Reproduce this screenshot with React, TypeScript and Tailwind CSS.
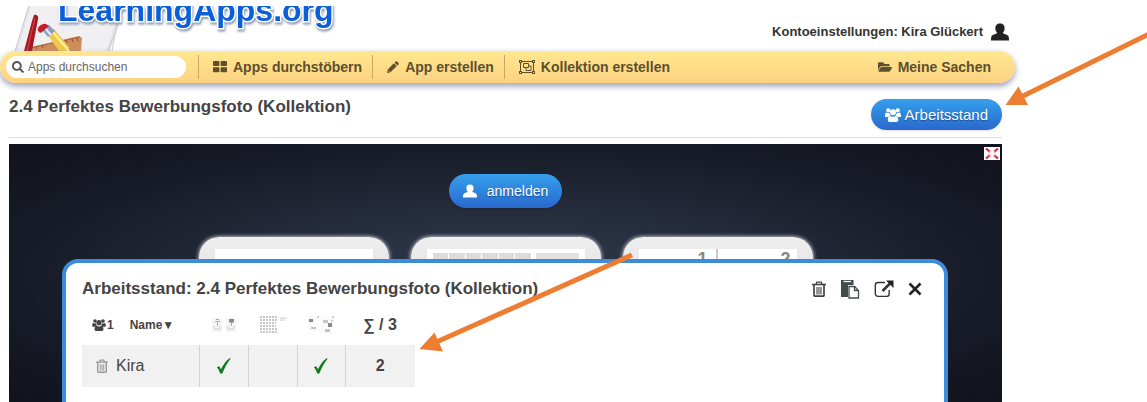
import React from 'react'
import { FaSearch, FaFolderOpen } from 'react-icons/fa'

const UserIcon = ({ className }: { className: string }) => (
  <svg viewBox="0 0 18 18" className={className} fill="currentColor" aria-hidden="true">
    <path d="M9 .5c3 0 4.800 2 4.600 5-.1 2.200-.9 3.600-1.900 4.600 1 1 5.300 1.600 5.900 3.300.3.900.4 2.600.4 4.100H0c0-1.500.1-3.200.4-4.100.6-1.700 4.900-2.300 5.900-3.300-1-1-1.800-2.400-1.900-4.600C4.200 2.500 6 .5 9 .5z" />
  </svg>
)

const UsersIcon = ({ className }: { className: string }) => (
  <svg viewBox="0 0 16 14" className={className} fill="currentColor" aria-hidden="true">
    <circle cx="3.300" cy="2.300" r="2.100" />
    <circle cx="12.700" cy="2.300" r="2.100" />
    <circle cx="8" cy="4.300" r="3" />
    <path d="M0 8.200C0 6 .5 4.600 1.700 4.600c1 .6 2 .7 2.700.5.100 1.100.6 2 1.200 2.700-1 .1-1.900.5-2.500 1.300H1.200C.5 9.100 0 8.800 0 8.200zM16 8.200c0-2.200-.5-3.600-1.700-3.600-1 .6-2 .7-2.700.5-.1 1.100-.6 2-1.200 2.700 1 .1 1.900.5 2.500 1.300h1.900c.7 0 1.200-.3 1.200-.9z" />
    <path d="M5.100 7.900c1.800 1 4 1 5.800 0 1.700.2 2.300 1.900 2.300 4 0 1.300-.9 2.100-2 2.100H4.800c-1.100 0-2-.8-2-2.100 0-2.100.6-3.800 2.300-4z" />
  </svg>
)

const TilesIcon = () => (
  <svg viewBox="0 0 14 12" className="w-3.5 h-3" fill="currentColor" aria-hidden="true">
    <rect width="6.400" height="5" rx=".8" />
    <rect x="7.600" width="6.400" height="5" rx=".8" />
    <rect y="6.200" width="6.400" height="5" rx=".8" />
    <rect x="7.600" y="6.200" width="6.400" height="5" rx=".8" />
  </svg>
)

const PencilIcon = () => (
  <svg viewBox="0 0 12 12" className="size-3" fill="currentColor" aria-hidden="true">
    <path d="M8.600.6c.4-.4 1-.4 1.400 0l1.500 1.500c.4.400.4 1 0 1.400l-1 1L7.500 1.600zM6.900 2.200l2.900 2.900-6.300 6.200L0 12l.7-3.600z" />
    <path d="M1.500 9.200l1.300 1.300-.8.300-.8-.8z" fill="#fddc88" />
  </svg>
)

const GroupIcon = () => (
  <svg viewBox="0 0 16 14" className="w-4 h-3.5" fill="none" stroke="currentColor" aria-hidden="true">
    <rect x="1.500" y="1.500" width="13" height="11" />
    <path d="M4.500 3.500h5v4h-5zM9.500 6h2.500v4.500H7v-3" />
    <path d="M0 0h3v3H0zM13 0h3v3h-3zM0 11h3v3H0zM13 11h3v3h-3z" fill="currentColor" stroke="none" />
    <path d="M1 1h1v1H1zM14 1h1v1h-1zM1 12h1v1H1zM14 12h1v1h-1z" fill="#fdde8a" stroke="none" />
  </svg>
)

const TrashIcon = ({ className }: { className: string }) => (
  <svg viewBox="0 0 14 16" className={className} fill="none" stroke="currentColor" aria-hidden="true">
    <path d="M0 3.500h14" strokeWidth="1.600" />
    <path d="M4 3.200l.8-2h4.400l.8 2" strokeWidth="1.300" />
    <path d="M2 4v10.200c0 .6.400 1 1 1h8c.6 0 1-.4 1-1V4" strokeWidth="1.700" />
    <path d="M5 6v7.500M7 6v7.500M9 6v7.500" strokeWidth="1.100" />
  </svg>
)

const PasteIcon = () => (
  <svg viewBox="0 0 20 20" className="size-5" aria-hidden="true">
    <path d="M1 1h12.500v5H8v12H1z" fill="#454b4d" />
    <path d="M3.500 2.500h7.500" stroke="#fff" strokeWidth="1.300" />
    <path d="M9 7.500h5.500l4 4v7.500H9z" fill="#fff" stroke="#454b4d" strokeWidth="1.300" />
    <path d="M14.500 7.500v4h4" fill="none" stroke="#454b4d" strokeWidth="1.300" />
  </svg>
)

const ExternalIcon = () => (
  <svg viewBox="0 0 20 18" className="w-5 h-[18px]" fill="none" stroke="#333" aria-hidden="true">
    <path d="M11 2.500H4A2.700 2.700 0 0 0 1.300 5.200v8.500A2.700 2.700 0 0 0 4 16.400h8.500a2.700 2.700 0 0 0 2.700-2.700V10" strokeWidth="1.400" />
    <path d="M8.500 11l7.500-7.500" strokeWidth="2.600" />
    <path d="M12 .5h7.500V8z" fill="#222" stroke="none" />
  </svg>
)

const CloseIcon = () => (
  <svg viewBox="0 0 14 14" className="size-3.5" stroke="#222" strokeWidth="2.600" aria-hidden="true">
    <path d="M1.500 1.500l11 11M12.500 1.500l-11 11" />
  </svg>
)

const FullscreenIcon = () => (
  <svg viewBox="0 0 16 13" className="block w-4 h-[13px]" fill="none" stroke="#d8284a" strokeWidth="2.200" aria-hidden="true">
    <rect width="16" height="13" fill="#fff" stroke="none" />
    <path d="M2 1.500l3.500 3M14 1.500l-3.500 3M2 11.500l3.500-3M14 11.500l-3.500-3" />
    <path d="M6.500 3v2.500H4M9.500 3v2.500H12M6.500 10V7.500H4M9.500 10V7.500H12" stroke="#f3b6c1" strokeWidth=".8" />
  </svg>
)

const Check = () => (
  <svg viewBox="0 0 16 18" className="w-4 h-[18px] mx-auto" role="img" aria-label="gelöst">
    <path d="M.8 10.300l2.400-1c.8.800 1.300 1.900 1.700 3.200C7 8 9.800 4 13.500 1.200l1.200.3C11.200 6 8.500 10.800 6.300 16.600H4.200C3.400 13.900 2.400 11.800.8 10.300z" fill="#117a1b" />
  </svg>
)

const LogoArt = () => (
  <svg viewBox="0 0 130 45" className="absolute left-0 top-0 w-[130px] h-[45px]" aria-hidden="true">
    <path d="M28 0L15 45h95l15-45z" fill="#e6e7ea" />
    <path d="M31 0L18 45h88l15-45z" fill="#f0f0f2" />
    <path d="M29 0L15 45M125 0l-17 45M118 12L112 45" fill="none" stroke="#c9cacf" />
    <path d="M27 45v-3l52-12 3 2-1 13z" fill="#cf8c5b" />
    <path d="M30 42l50-11" stroke="#a96439" />
    <path d="M36 41l1 2M42 39l1 3M66 34l1 3M72 33l1 3M77 32l1 3" stroke="#8d4f2b" />
    <path d="M34 9c2-1 5 1 4 4l-6 32h-8l8-30z" fill="#a8161f" />
    <path d="M35 12l-8 33" stroke="#d34b51" />
    <path d="M47 28l7-5 15 18v4H59z" fill="#efc84c" />
    <path d="M52 25l17 20" stroke="#fff0a0" strokeWidth="2" />
    <path d="M42 24l7-5 6 6-7 6z" fill="#8d9ec4" />
    <path d="M45 22l6 7" stroke="#e6ebf5" strokeWidth="2" />
    <path d="M38 25c-2-3 4-8 8-7l3 2-7 6-2 1z" fill="#c61f2c" />
  </svg>
)

const PairThumb = () => (
  <svg viewBox="0 0 24 16" className="w-6 h-4 mx-auto" aria-hidden="true">
    <path d="M0 1h10v14H0zM14 1h10v14H14z" fill="#f5f5f5" />
    <path d="M3 4.500h5M4 2.500h3M5.500 5.500v3.500M19.500 5v4" stroke="#aaa" />
    <path d="M17 2h5v3.500h-5z" fill="#888" />
    <path d="M2 9v3h6V9M16 9v3h6V9" fill="none" stroke="#ccc" />
  </svg>
)

const GridThumb = () => (
  <svg viewBox="0 0 28 20" className="w-7 h-5 mx-auto" aria-hidden="true">
    <path d="M1 2h18M1 5h18M1 8h16M1 11h16M1 14h18M1 17h18" stroke="#b4b4b4" strokeWidth="1.500" strokeDasharray="2 1" />
    <path d="M21 3h7M21 5h5" stroke="#ccc" />
  </svg>
)

const ClusterThumb = () => (
  <svg viewBox="0 0 28 20" className="w-7 h-5 mx-auto" aria-hidden="true">
    <path d="M1 1h12v15H1zM14 1h13v18H14z" fill="#fafafa" />
    <path d="M2 4h4v3H2zM21 8h4v4h-4z" fill="#8a8a8a" />
    <path d="M16 5h5v3h-5zM18 14h5v3h-5zM4 12h5v2H4z" fill="#c4c4c4" />
    <path d="M11 1v2M26 1v2M24 6h2" stroke="#aaa" />
  </svg>
)

const navLink = 'flex items-center gap-1.5 text-sm font-bold text-[#5c502f]'

const card =
  'w-[190px] h-16 rounded-t-[20px] bg-gradient-to-b from-[#efefef] to-[#dcdcdc] pt-3 px-4 shadow-[0_0_4px_#fff]'

const blueButton =
  'flex items-center rounded-full bg-gradient-to-b from-[#35a0ec] to-[#2a68cd] text-sm text-white [text-shadow:0_1px_1px_#1d4f91] shadow-sm'

const App = () => {
  return (
    <div className="relative min-h-screen overflow-hidden bg-white text-[#444] font-['Liberation_Sans',Arial,sans-serif]">
      <div className="mr-[132px]">
        <header className="pt-1.5">
          <div className="relative flex justify-between h-[45px] overflow-hidden">
            <LogoArt />
            <a
              href="#"
              className="relative -mt-4 ml-[58px] text-[32px] leading-10 font-bold text-[#0b5fd8] [paint-order:stroke_fill] [-webkit-text-stroke:3px_#fff] [filter:drop-shadow(1px_2px_1px_#8f9bb0)]"
            >
              LearningApps.org
            </a>
            <a href="#" className="flex items-center gap-2 mt-1.5 mr-1.5 text-[13px] font-bold text-[#333]">
              Kontoeinstellungen: Kira Glückert
              <UserIcon className="size-[18px] text-[#222]" />
            </a>
          </div>
          <nav className="relative flex items-center h-8 pl-1.5 pr-6 rounded-full bg-gradient-to-b from-[#ffe88e] to-[#fdd283] shadow-[0_3px_6px_#9a9ab8]">
            <label className="flex items-center gap-1 w-[180px] h-[22px] pl-1.5 rounded-full bg-white">
              <FaSearch className="size-3 text-[#555]" />
              <input
                type="text"
                aria-label="Apps durchsuchen"
                placeholder="Apps durchsuchen"
                className="w-36 text-xs outline-none placeholder:text-[#666]"
              />
            </label>
            <span className="w-px h-6 ml-3 mr-3.5 bg-[#c9a765]" />
            <a href="#" className={navLink}>
              <TilesIcon />
              Apps durchstöbern
            </a>
            <span className="w-px h-6 ml-2.5 mr-3.5 bg-[#c9a765]" />
            <a href="#" className={navLink}>
              <PencilIcon />
              App erstellen
            </a>
            <span className="w-px h-6 ml-2.5 mr-3.5 bg-[#c9a765]" />
            <a href="#" className={navLink}>
              <GroupIcon />
              Kollektion erstellen
            </a>
            <a href="#" className={`${navLink} ml-auto`}>
              <FaFolderOpen className="size-3.5" />
              Meine Sachen
            </a>
          </nav>
        </header>

        <main className="pl-[9px] pr-[13px]">
          <div className="flex items-start justify-between pt-4 pb-[7px] border-b border-[#ddd]">
            <h1 className="text-[17px] leading-4 font-bold">2.4 Perfektes Bewerbungsfoto (Kollektion)</h1>
            <button className={`${blueButton} h-[31px] gap-1 px-3.5 text-[15px]`}>
              <UsersIcon className="w-4 h-3.5" />
              Arbeitsstand
            </button>
          </div>

          <section className="relative mt-1.5 h-[260px] bg-[radial-gradient(ellipse_at_50%_50%,#303a4e_0%,#252c3c_35%,#171b27_70%,#10131d_100%)]">
            <button aria-label="Vollbild" className="absolute top-[3px] right-0.5">
              <FullscreenIcon />
            </button>
            <div className="flex justify-center pt-[30px]">
              <button className={`${blueButton} h-[34px] gap-2.5 px-3.5`}>
                <UserIcon className="size-3.5" />
                anmelden
              </button>
            </div>
            <div className="flex justify-center gap-[22px] mt-[29px]">
              <div className={card}>
                <div className="h-12 bg-white" />
              </div>
              <div className={card}>
                <div className="flex gap-px h-12 pt-1 px-1.5 bg-white">
                  <span className="w-4 bg-[#dcdcdc]" />
                  <span className="w-4 bg-[#dcdcdc]" />
                  <span className="w-4 bg-[#dcdcdc]" />
                  <span className="w-4 bg-[#dcdcdc]" />
                  <span className="w-4 bg-[#dcdcdc]" />
                  <span className="w-4 bg-[#dcdcdc]" />
                  <span className="w-11 ml-1 bg-[#e2e2e2]" />
                </div>
              </div>
              <div className={card}>
                <div className="grid grid-cols-2 h-12 bg-white text-lg leading-5 font-bold text-right text-[#888]">
                  <span className="pr-2 border-r-2 border-[#ccc]">1</span>
                  <span className="pr-1.5">2</span>
                </div>
              </div>
            </div>

            <div
              role="dialog"
              aria-labelledby="stand"
              className="absolute top-[115px] left-[53px] right-[54px] h-[200px] px-4 pt-4 rounded-2xl border-4 border-[#3d8cdb] bg-white"
            >
              <div className="flex items-center justify-between h-5 pr-1.5">
                <h2 id="stand" className="text-[17px] leading-4 font-bold">Arbeitsstand: 2.4 Perfektes Bewerbungsfoto (Kollektion)</h2>
                <div className="flex items-center gap-3.5">
                  <button aria-label="Löschen">
                    <TrashIcon className="w-3.5 h-4 text-[#444]" />
                  </button>
                  <button aria-label="Kopieren">
                    <PasteIcon />
                  </button>
                  <button aria-label="Extern öffnen">
                    <ExternalIcon />
                  </button>
                  <button aria-label="Schließen">
                    <CloseIcon />
                  </button>
                </div>
              </div>
              <table className="mt-1.5 table-fixed w-[333px] border-collapse text-center">
                <thead>
                  <tr className="h-10">
                    <th className="w-[117px] pl-2.5 text-xs">
                      <div className="flex items-center gap-4">
                        <span className="flex items-center gap-px">
                          <UsersIcon className="w-3.5 h-3" />1
                        </span>
                        <span>Name▼</span>
                      </div>
                    </th>
                    <th className="w-[49px]"><PairThumb /></th>
                    <th className="w-[49px]"><GridThumb /></th>
                    <th className="w-[48px]"><ClusterThumb /></th>
                    <th className="w-[70px] text-base">∑ / 3</th>
                  </tr>
                </thead>
                <tbody>
                  <tr className="h-[42px] bg-[#f1f1f1]">
                    <td className="pl-3.5">
                      <div className="flex items-center gap-2">
                        <TrashIcon className="w-3 h-3.5 text-[#999]" />
                        Kira
                      </div>
                    </td>
                    <td className="border-l border-[#d4d4d4]"><Check /></td>
                    <td className="border-l border-[#d4d4d4]" />
                    <td className="border-l border-[#d4d4d4]"><Check /></td>
                    <td className="border-l border-[#d4d4d4] font-bold">2</td>
                  </tr>
                </tbody>
              </table>
            </div>
          </section>
        </main>
      </div>

      <svg className="absolute left-0 top-0 w-[1147px] h-[402px] pointer-events-none" viewBox="0 0 1147 402" fill="#ed7d31" stroke="#ed7d31" aria-hidden="true">
        <path d="M1149 34L1022 96.500M632 255L433 343.500" strokeWidth="5" />
        <path d="M1005.500 105l13-18.500 9.500 18.500zM419.500 349l15-16.500 8.500 19z" stroke="none" />
      </svg>
    </div>
  )
}

export default App
